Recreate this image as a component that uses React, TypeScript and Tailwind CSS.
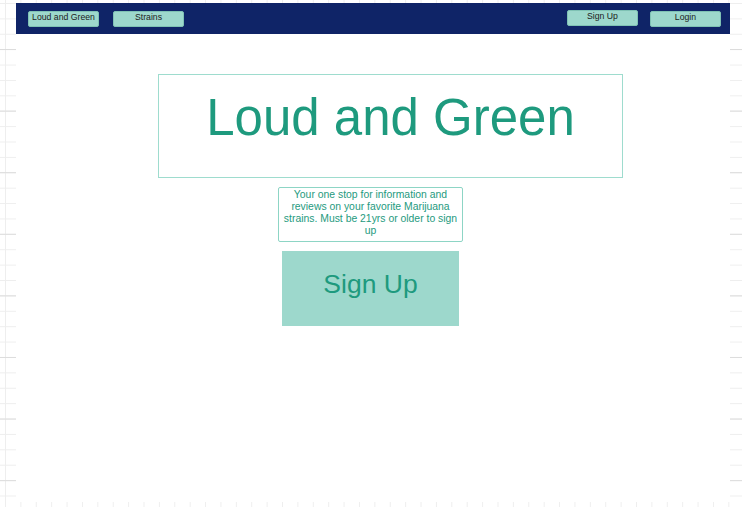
import React from 'react';

// Botão pequeno da barra de navegação
const NavButton: React.FC<{ label: string; className?: string }> = ({ label, className = '' }) => (
  <button
    className={`w-[71px] h-[16px] rounded-[2px] bg-[#9dd8cc] border border-[#7fc2b4] text-[8.7px] leading-none text-[#1c1c1c] pb-[3px] ${className}`}
  >
    {label}
  </button>
);

const App: React.FC = () => {
  return (
    <div
      className="w-[742px] h-[507px] overflow-hidden pt-[3px] pl-[16px] bg-white [background-image:linear-gradient(to_bottom,#dcdcdc_1px,transparent_1px),linear-gradient(to_bottom,#eeeeee_1px,transparent_1px),linear-gradient(to_right,#eeeeee_1px,transparent_1px)] [background-size:61.6px_61.6px,15.4px_15.4px,15.4px_15.4px] [background-position:0_49px,0_3px,5px_0]"
      style={{ fontFamily: '"Liberation Sans", Arial, sans-serif' }}
    >
      <div className="w-[714px] h-[499px] bg-white flex flex-col">
        {/* Barra de navegação */}
        <nav className="h-[31px] bg-[#0f2467] flex items-start pt-[8px] pl-[12px] pr-[9px]">
          <NavButton label="Loud and Green" />
          <NavButton label="Strains" className="ml-[14px]" />
          <div className="flex-1" />
          <NavButton label="Sign Up" className="-mt-[1px]" />
          <NavButton label="Login" className="ml-[12px]" />
        </nav>

        {/* Título */}
        <div className="mt-[40px] ml-[142px] w-[465px] h-[104px] border border-[#9edcce] pt-[17px]">
          <h1 className="text-center text-[51px] leading-[52px] text-[#1e9a7e]">Loud and Green</h1>
        </div>

        {/* Descrição */}
        <div className="mt-[9px] ml-[262px] w-[185px] h-[55px] border border-[#8dd5c5] rounded-[2px] px-[3px] pt-[1px]">
          <p className="text-center text-[10.4px] leading-[12px] text-[#1e9a7e]">
            Your one stop for information and reviews on your favorite Marijuana strains. Must be 21yrs or older to sign up
          </p>
        </div>

        {/* Botão de cadastro */}
        <button className="mt-[9px] ml-[266px] w-[177px] h-[75px] bg-[#9dd8cc] flex justify-center pt-[18px]">
          <span className="text-[26.5px] leading-[30px] text-[#1e9a7e]">Sign Up</span>
        </button>
      </div>
    </div>
  );
};

export default App;
